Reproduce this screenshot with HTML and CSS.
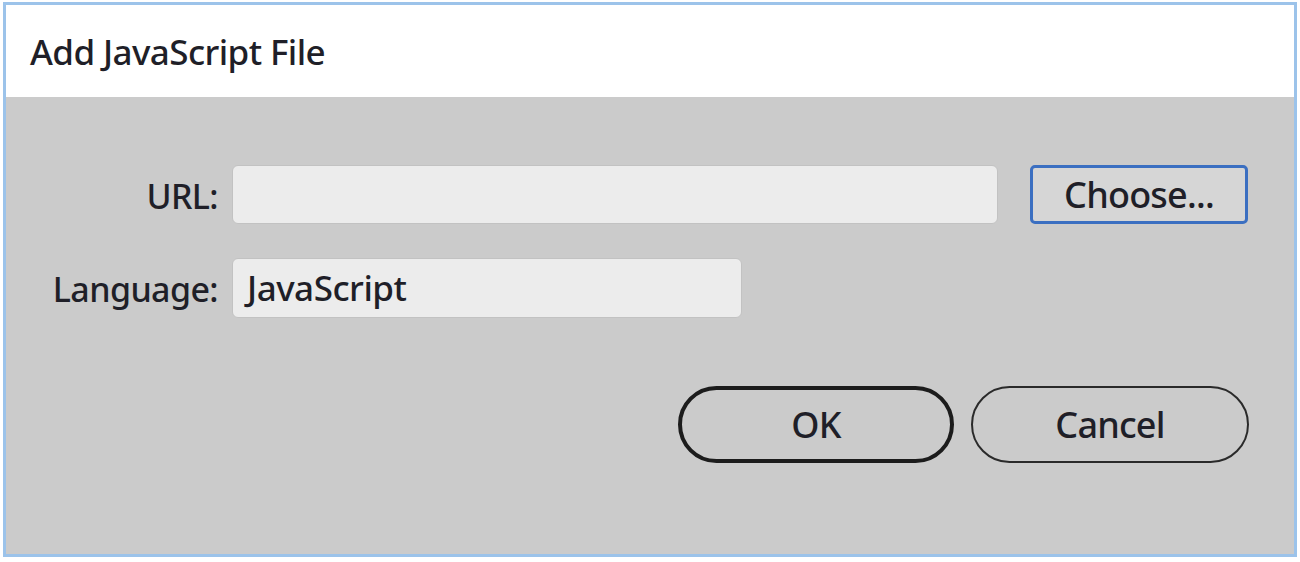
FILE: index.html
```html
<!DOCTYPE html>
<html lang="en">
<head>
<meta charset="utf-8">
<title>Add JavaScript File</title>
<link rel="stylesheet" href="styles.css">
</head>
<body>
<div class="dialog">
  <div class="titlebar">Add JavaScript File</div>
  <div class="content">
    <div class="row row-url">
      <label class="label">URL:</label>
      <div class="field field-url"></div>
      <button class="btn-choose">Choose...</button>
    </div>
    <div class="row row-lang">
      <label class="label">Language:</label>
      <div class="field field-lang">JavaScript</div>
    </div>
    <div class="actions">
      <button class="pill pill-ok">OK</button>
      <button class="pill pill-cancel">Cancel</button>
    </div>
  </div>
</div>
</body>
</html>
```

FILE: styles.css
```css
html, body {
  margin: 0;
  padding: 0;
  background: #ffffff;
}
body {
  width: 1300px;
  height: 562px;
  overflow: hidden;
  font-family: "Noto Sans", "Open Sans", "DejaVu Sans", sans-serif;
  font-weight: 500;
  color: #1f1f28;
}
.dialog {
  box-sizing: border-box;
  margin: 2px 0 0 3px;
  width: 1294px;
  height: 555px;
  border: 3px solid #9cc3ea;
  background: #cbcbcb;
  display: flex;
  flex-direction: column;
}
.titlebar {
  height: 92px;
  background: #ffffff;
  box-sizing: border-box;
  padding: 25px 0 0 24px;
  font-size: 35px;
  line-height: 44px;
  letter-spacing: -0.6px;
}
.content {
  display: flex;
  flex-direction: column;
  padding-top: 68px;
}
.row {
  display: flex;
  align-items: center;
}
.row-lang {
  margin-top: 34px;
}
.label {
  width: 212px;
  text-align: right;
  font-size: 34px;
  letter-spacing: -0.6px;
  margin-right: 14px;
  padding-top: 2px;
}
.field {
  box-sizing: border-box;
  height: 59px;
  background: #ececec;
  border: 1px solid #c2c2c2;
  border-radius: 6px;
  font-size: 35px;
  line-height: 58px;
  padding-left: 14px;
  letter-spacing: -0.5px;
}
.field-url {
  width: 766px;
}
.field-lang {
  width: 510px;
  height: 60px;
}
.btn-choose {
  box-sizing: border-box;
  margin-left: 32px;
  width: 218px;
  height: 59px;
  background: #d6d6d6;
  border: 3px solid #3b6fc1;
  border-radius: 5px;
  font-family: inherit;
  font-weight: 500;
  font-size: 36px;
  color: #1f1f28;
  letter-spacing: -0.8px;
  padding: 0;
}
.actions {
  display: flex;
  justify-content: flex-end;
  gap: 17px;
  margin-top: 68px;
  padding-right: 45px;
}
.pill {
  box-sizing: border-box;
  height: 77px;
  border-radius: 40px;
  background: #cbcbcb;
  font-family: inherit;
  font-weight: 500;
  font-size: 36px;
  color: #1f1f28;
  padding: 0;
  letter-spacing: -0.8px;
}
.pill-ok {
  width: 276px;
  border: 4px solid #1c1c1c;
}
.pill-cancel {
  width: 278px;
  border: 2px solid #2a2a2a;
}
```
